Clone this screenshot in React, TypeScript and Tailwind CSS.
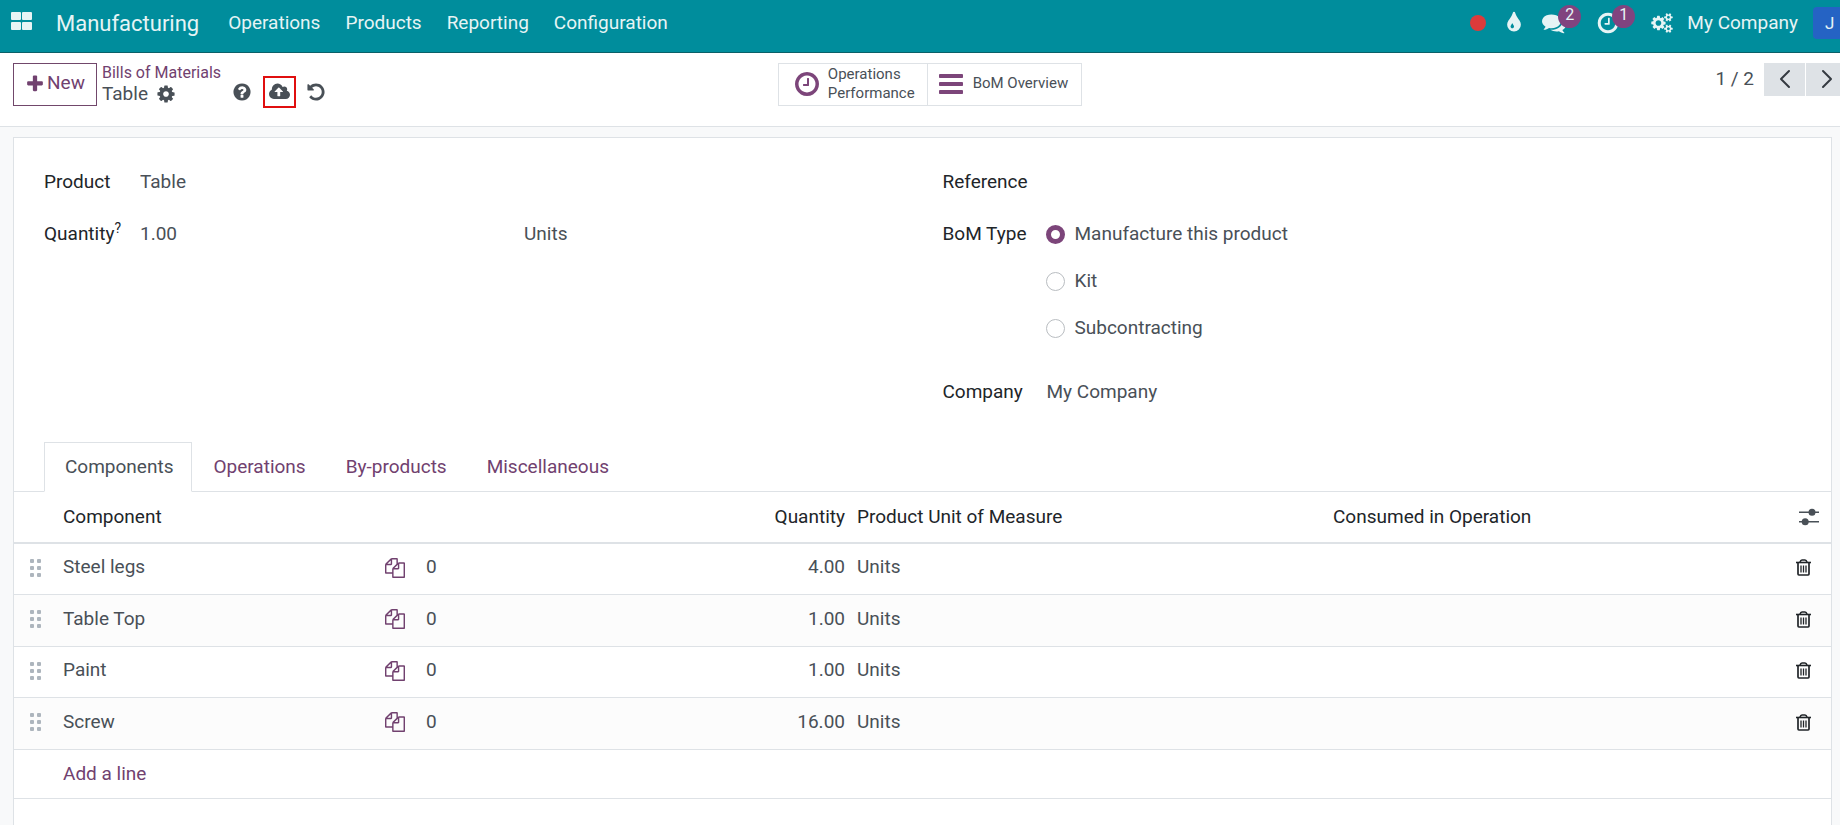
import { useState } from "react";

type Line = {
  name: string;
  attachments: number;
  quantity: string;
  unit: string;
};

const lines: Line[] = [
  { name: "Steel legs", attachments: 0, quantity: "4.00", unit: "Units" },
  { name: "Table Top", attachments: 0, quantity: "1.00", unit: "Units" },
  { name: "Paint", attachments: 0, quantity: "1.00", unit: "Units" },
  { name: "Screw", attachments: 0, quantity: "16.00", unit: "Units" },
];

const menus = ["Operations", "Products", "Reporting", "Configuration"];
const tabs = ["Components", "Operations", "By-products", "Miscellaneous"];
const bomTypes = ["Manufacture this product", "Kit", "Subcontracting"];

const paths = {
  plus: "M1600 736v192q0 40-28 68t-68 28h-416v416q0 40-28 68t-68 28h-192q-40 0-68-28t-28-68v-416h-416q-40 0-68-28t-28-68v-192q0-40 28-68t68-28h416v-416q0-40 28-68t68-28h192q40 0 68 28t28 68v416h416q40 0 68 28t28 68z",
  cog: "M1152 896q0-106-75-181t-181-75-181 75-75 181 75 181 181 75 181-75 75-181zm512-109v222q0 12-8 23t-20 13l-185 28q-19 54-39 91 35 50 107 138 10 12 10 25t-9 23q-27 37-99 108t-94 71q-12 0-26-9l-138-108q-44 23-91 38-16 136-29 186-7 28-36 28h-222q-14 0-24.5-8.5t-11.5-21.5l-28-184q-49-16-90-37l-141 107q-10 9-25 9-14 0-25-11-126-114-165-168-7-10-7-23 0-12 8-23 15-21 51-66.5t54-70.5q-27-50-41-99l-183-27q-13-2-21-12.5t-8-23.5v-222q0-12 8-23t19-13l186-28q14-46 39-92-40-57-107-138-10-12-10-24 0-10 9-23 26-36 98.5-107.5t94.5-71.5q13 0 26 10l138 107q44-23 91-38 16-136 29-186 7-28 36-28h222q14 0 24.5 8.5t11.5 21.5l28 184q49 16 90 37l142-107q9-9 24-9 13 0 25 10 129 119 165 170 7 8 7 22 0 12-8 23-15 21-51 66.5t-54 70.5q26 50 41 98l183 28q13 2 21 12.5t8 23.5z",
  help: "M1024 1376v-192q0-14-9-23t-23-9h-192q-14 0-23 9t-9 23v192q0 14 9 23t23 9h192q14 0 23-9t9-23zm256-672q0-88-55.5-163t-138.5-116-170-41q-243 0-371 213-15 24 8 42l132 100q7 6 19 6 16 0 25-12 53-68 86-92 34-24 86-24 48 0 85.5 26t37.5 59q0 38-20 61t-68 45q-63 28-115.5 86.5t-52.5 125.5v36q0 14 9 23t23 9h192q14 0 23-9t9-23q0-19 21.5-49.5t54.5-49.5q32-18 49-28.5t46-35 44.5-48 28-60.5 12.5-81zm384 192q0 209-103 385.5t-279.5 279.5-385.5 103-385.5-103-279.5-279.5-103-385.5 103-385.5 279.5-279.5 385.5-103 385.5 103 279.5 279.5 103 385.5z",
  upload: "M1216 864q0-14-9-23l-352-352q-9-9-23-9t-23 9l-351 351q-10 12-10 24 0 14 9 23t23 9h224v352q0 13 9.5 22.5t22.5 9.5h192q13 0 22.5-9.5t9.5-22.5v-352h224q13 0 22.5-9.5t9.5-22.5zm640 288q0 159-112.5 271.5t-271.5 112.5h-1088q-185 0-316.5-131.5t-131.5-316.5q0-130 70-240t188-165q-2-30-2-43 0-212 150-362t362-150q156 0 285.5 87t188.5 231q71-62 166-62 106 0 181 75t75 181q0 76-41 138 130 31 213.5 135.5t83.5 238.5z",
  undo: "M1664 896q0 156-61 298t-164 245-245 164-298 61q-172 0-327-72.5t-264-204.5q-7-10-6.5-22.5t8.5-20.5l137-138q10-9 25-9 16 2 23 12 73 95 179 147t225 52q104 0 198.5-40.5t163.5-109.5 109.5-163.5 40.5-198.5-40.5-198.5-109.5-163.5-163.5-109.5-198.5-40.5q-98 0-188 35.5t-160 101.5l137 138q31 30 14 69-17 40-59 40h-448q-26 0-45-19t-19-45v-448q0-42 40-59 39-17 69 14l130 129q107-101 244.5-156.5t284.5-55.5q156 0 298 61t245 164 164 245 61 298z",
  clock: "M1024 544v448q0 14-9 23t-23 9h-320q-14 0-23-9t-9-23v-64q0-14 9-23t23-9h224v-352q0-14 9-23t23-9h64q14 0 23 9t9 23zm416 352q0-148-73-273t-198-198-273-73-273 73-198 198-73 273 73 273 198 198 273 73 273-73 198-198 73-273zm224 0q0 209-103 385.5t-279.5 279.5-385.5 103-385.5-103-279.5-279.5-103-385.5 103-385.5 279.5-279.5 385.5-103 385.5 103 279.5 279.5 103 385.5z",
  bars: "M1664 1344v128q0 26-19 45t-45 19h-1408q-26 0-45-19t-19-45v-128q0-26 19-45t45-19h1408q26 0 45 19t19 45zm0-512v128q0 26-19 45t-45 19h-1408q-26 0-45-19t-19-45v-128q0-26 19-45t45-19h1408q26 0 45 19t19 45zm0-512v128q0 26-19 45t-45 19h-1408q-26 0-45-19t-19-45v-128q0-26 19-45t45-19h1408q26 0 45 19t19 45z",
  tint: "M896 1152q0-36-20-69-1-1-15.5-22.5t-25.5-38-25-44-21-50.5q-4-16-21-16t-21 16q-7 23-21 50.5t-25 44-25.5 38-15.5 22.5q-20 33-20 69 0 53 37.5 90.5t90.5 37.5 90.5-37.5 37.5-90.5zm512-128q0 212-150 362t-362 150-362-150-150-362q0-145 81-275 6-9 62.5-90.5t101-151 99.5-178 83-201.5q9-30 34-47t51-17 51.5 17 33.5 47q28 93 83 201.5t99.5 178 101 151 62.5 90.5q81 127 81 275z",
  comments: "M1408 768q0 139-94 257t-256.5 186.5-353.5 68.5q-86 0-176-16-124 88-278 128-36 9-86 16h-3q-11 0-20.5-8t-11.5-21q-1-3-1-6.5t.5-6.5 2-6l2.5-5 3.5-5.5 4-5 4.5-5 4-4.5q5-6 23-25t26-29.5 22.5-29 25-38.5 20.5-44q-124-72-195-177t-71-224q0-139 94-257t256.5-186.5 353.5-68.5 353.5 68.5 256.5 186.5 94 257zm384 256q0 120-71 224.5t-195 176.5q10 24 20.5 44t25 38.5 22.5 29 26 29.5 23 25q1 1 4 4.5t4.5 5 4 5 3.5 5.5l2.5 5 2 6 .5 6.5-1 6.5q-3 14-13 22t-22 7q-50-7-86-16-154-40-278-128-90 16-176 16-271 0-472-132 58 4 88 4 161 0 309-45t264-129q125-92 192-212t67-254q0-77-23-152 129 71 204 178t75 230z",
  cogs: "M832 896q0-106-75-181t-181-75-181 75-75 181 75 181 181 75 181-75 75-181zm768 512q0-52-38-90t-90-38-90 38-38 90q0 53 37.5 90.5t90.5 37.5 90.5-37.5 37.5-90.5zm0-1024q0-52-38-90t-90-38-90 38-38 90q0 53 37.5 90.5t90.5 37.5 90.5-37.5 37.5-90.5zm-384 421v185q0 10-7 19.5t-16 10.5l-155 24q-11 35-32 76 34 48 90 115 7 11 7 20 0 12-7 19-23 30-82.5 89.5t-78.5 59.5q-11 0-21-7l-115-90q-37 19-77 31-11 108-23 155-7 24-30 24h-186q-11 0-20-7.5t-10-17.5l-23-153q-34-10-75-31l-118 89q-7 7-20 7-11 0-21-8-144-133-144-160 0-9 7-19 10-14 41-53t47-61q-23-44-35-82l-152-24q-10-1-17-9.5t-7-19.5v-185q0-10 7-19.5t16-10.5l155-24q11-35 32-76-34-48-90-115-7-11-7-20 0-12 7-20 22-30 82-89t79-59q11 0 21 7l115 90q34-18 77-32 11-108 23-154 7-24 30-24h186q11 0 20 7.5t10 17.5l23 153q34 10 75 31l118-89q8-7 20-7 11 0 21 8 144 133 144 160 0 8-7 19-12 16-42 54t-45 60q23 48 34 82l152 23q10 2 17 10.5t7 19.5zm640 533v140q0 16-149 31-12 27-30 52 51 113 51 138 0 4-4 7-122 71-124 71-8 0-46-47t-52-68q-20 2-30 2t-30-2q-14 21-52 68t-46 47q-2 0-124-71-4-3-4-7 0-25 51-138-18-25-30-52-149-15-149-31v-140q0-16 149-31 13-29 30-52-51-113-51-138 0-4 4-7 4-2 35-20t59-34 30-16q8 0 46 46.5t52 67.5q20-2 30-2t30 2q51-71 92-112l6-2q4 0 124 70 4 3 4 7 0 25-51 138 17 23 30 52 149 15 149 31zm0-1024v140q0 16-149 31-12 27-30 52 51 113 51 138 0 4-4 7-122 71-124 71-8 0-46-47t-52-68q-20 2-30 2t-30-2q-14 21-52 68t-46 47q-2 0-124-71-4-3-4-7 0-25 51-138-18-25-30-52-149-15-149-31v-140q0-16 149-31 13-29 30-52-51-113-51-138 0-4 4-7 4-2 35-20t59-34 30-16q8 0 46 46.5t52 67.5q20-2 30-2t30 2q51-71 92-112l6-2q4 0 124 70 4 3 4 7 0 25-51 138 17 23 30 52 149 15 149 31z",
  files: "M1696 384q40 0 68 28t28 68v1216q0 40-28 68t-68 28h-960q-40 0-68-28t-28-68v-288h-544q-40 0-68-28t-28-68v-672q0-40 20-88t48-76l408-408q28-28 76-48t88-20h416q40 0 68 28t28 68v328q68-40 128-40h416zm-544 213l-299 299h299v-299zm-640-384l-299 299h299v-299zm196 647l316-316v-416h-384v416q0 40-28 68t-68 28h-416v640h512v-256q0-40 20-88t48-76zm956 804v-1152h-384v416q0 40-28 68t-68 28h-416v640h896z",
};

type IconProps = {
  name: keyof typeof paths;
  className: string;
};

function Icon({ name, className }: IconProps) {
  const wide = name === "upload" || name === "cogs";
  return (
    <svg
      viewBox={wide ? "-64 0 1920 1792" : "0 0 1792 1792"}
      className={`shrink-0 ${className}`}
      fill="currentColor"
      aria-hidden="true"
    >
      <path d={paths[name]} />
    </svg>
  );
}

function AppsIcon() {
  return (
    <svg viewBox="0 0 21 18" className="h-[18px] w-[21px]" fill="currentColor" aria-hidden="true">
      <rect width="10" height="8" rx="1" />
      <rect x="11" width="10" height="8" rx="1" />
      <rect y="10" width="10" height="8" rx="1" />
      <rect x="11" y="10" width="10" height="8" rx="1" />
    </svg>
  );
}

function TrashIcon() {
  return (
    <svg viewBox="0 0 15 17" className="h-[17px] w-[15px]" fill="none" stroke="currentColor" aria-hidden="true">
      <path d="M0 3.5h15" strokeWidth="1.6" />
      <path d="M4 3.2q.6-2.2 2-2.2h3q1.4 0 2 2.2" strokeWidth="1.6" />
      <path d="M2 3.5v11.6q0 .9.9.9h9.2q.9 0 .9-.9V3.5" strokeWidth="1.7" />
      <path d="M5 6.5v7M7.5 6.5v7M10 6.5v7" strokeWidth="1.3" />
    </svg>
  );
}

function SlidersIcon() {
  return (
    <svg viewBox="0 0 20 18" className="h-[18px] w-5" fill="currentColor" aria-hidden="true">
      <path d="M0 3.5h20v1.4H0zM0 13h20v1.4H0z" />
      <circle cx="13" cy="4.2" r="3.5" />
      <circle cx="6.2" cy="13.7" r="3.5" />
    </svg>
  );
}

function HandleIcon() {
  return (
    <svg viewBox="0 0 12 18" className="h-[18px] w-3" fill="#adb5bd" aria-hidden="true">
      {[0, 7].map((x) =>
        [0, 7, 14].map((y) => <rect key={`${x}-${y}`} x={x} y={y} width="4" height="4" rx="1" />)
      )}
    </svg>
  );
}

function Chevron({ d }: { d: string }) {
  return (
    <svg viewBox="0 0 12 20" className="h-5 w-3" fill="none" stroke="#343a40" strokeWidth="2" aria-hidden="true">
      <path d={d} strokeLinecap="round" strokeLinejoin="round" />
    </svg>
  );
}

function Navbar() {
  return (
    <header className="flex h-[53px] items-center overflow-hidden border-b border-[#0b6068] bg-[#008d9c] pb-[7px] pl-[11px] text-[#e6f4f5]">
      <button type="button" aria-label="Apps" className="-mt-1">
        <AppsIcon />
      </button>
      <a href="#" className="ml-6 pt-0.5 text-[22px]">
        Manufacturing
      </a>
      <nav className="ml-[29px] flex gap-[25px] pt-0.5 text-[19px]">
        {menus.map((menu) => (
          <a key={menu} href="#">
            {menu}
          </a>
        ))}
      </nav>
      <div className="-mr-2 ml-auto flex items-center text-[19px]">
        <span className="size-4 rounded-full bg-[#dc3b3b]" />
        <button type="button" aria-label="Theme" className="ml-4">
          <Icon name="tint" className="size-6" />
        </button>
        <button type="button" aria-label="Messages" className="relative ml-4">
          <Icon name="comments" className="size-6" />
          <span className="absolute -top-[6px] left-4 flex size-[23px] items-center justify-center rounded-full bg-[#81437f] pb-[3px] text-base">
            2
          </span>
        </button>
        <button type="button" aria-label="Activities" className="relative ml-[30px]">
          <Icon name="clock" className="size-6" />
          <span className="absolute -top-[6px] left-4 flex size-[23px] items-center justify-center rounded-full bg-[#81437f] pb-[3px] text-base">
            1
          </span>
        </button>
        <button type="button" aria-label="Developer tools" className="ml-[31px]">
          <Icon name="cogs" className="h-5 w-[22px]" />
        </button>
        <button type="button" className="ml-[14px] pt-0.5">
          My Company
        </button>
        <button
          type="button"
          className="ml-[15px] size-8 w-[35px] rounded bg-[#2563c4] pt-0.5 pl-3 text-left text-[17px]"
        >
          J
        </button>
      </div>
    </header>
  );
}

function ControlPanel() {
  return (
    <div className="flex h-[74px] items-start border-b border-[#dee2e6] bg-white pt-[10px] pl-[13px]">
      <div className="flex flex-1 items-start">
        <button
          type="button"
          className="flex h-[43px] w-[84px] items-center justify-center gap-0.5 border border-[#71476b] pb-0.5 text-[19px] text-[#71416f]"
        >
          <Icon name="plus" className="size-5" />
          New
        </button>
        <div className="-mt-px ml-[5px] text-base leading-[21px]">
          <a href="#" className="block text-[#71416f]">
            Bills of Materials
          </a>
          <div className="flex items-center gap-2 text-[19px]">
            <span>Table</span>
            <button type="button" aria-label="Actions">
              <Icon name="cog" className="size-5" />
            </button>
          </div>
        </div>
        <div className="ml-[11px] flex items-center pt-[13px]">
          <button type="button" aria-label="Help">
            <Icon name="help" className="size-5" />
          </button>
          <button
            type="button"
            aria-label="Save manually"
            className="ml-[11px] flex h-8 w-[33px] items-center justify-center border-2 border-[#e00f0f]"
          >
            <Icon name="upload" className="h-5 w-[21px]" />
          </button>
          <button type="button" aria-label="Discard changes" className="ml-[10px]">
            <Icon name="undo" className="size-5" />
          </button>
        </div>
      </div>
      <div className="ml-[7px] flex h-[43px] border border-[#dee2e6] text-[15px] leading-[19px]">
        <button type="button" className="flex items-center gap-[7px] border-r border-[#dee2e6] pr-3 pb-0.5 pl-[14px] text-left">
          <Icon name="clock" className="size-7 text-[#7c457a]" />
          <span>
            Operations
            <br />
            Performance
          </span>
        </button>
        <button type="button" className="flex items-center gap-2 pr-[13px] pb-0.5 pl-[9px]">
          <Icon name="bars" className="size-7 text-[#7c457a]" />
          BoM Overview
        </button>
      </div>
      <div className="flex flex-1 items-center justify-end overflow-hidden text-[19px]">
        <span className="mr-[10px]">1 / 2</span>
        <div className="-mr-[7px] flex gap-px">
          <button
            type="button"
            aria-label="Previous"
            className="flex h-[33px] w-[41px] items-center justify-center bg-[#dee2e6] pb-0.5"
          >
            <Chevron d="M10 2L2 10l8 8" />
          </button>
          <button
            type="button"
            aria-label="Next"
            className="flex h-[33px] w-[41px] items-center justify-center bg-[#dee2e6] pb-0.5"
          >
            <Chevron d="M2 2l8 8-8 8" />
          </button>
        </div>
      </div>
    </div>
  );
}

function BomForm() {
  const [bomType, setBomType] = useState(bomTypes[0]);

  return (
    <form className="grid grid-cols-2 px-[30px] pt-[30px]">
      <div>
        <div className="flex h-7 items-center">
          <label htmlFor="product" className="w-24 text-[#212529]">
            Product
          </label>
          <input id="product" defaultValue="Table" className="w-80 outline-none" />
        </div>
        <div className="mt-6 flex h-7 items-center">
          <label htmlFor="quantity" className="w-24 text-[#212529]">
            Quantity<sup className="text-sm">?</sup>
          </label>
          <input id="quantity" defaultValue="1.00" className="w-[384px] outline-none" />
          <input aria-label="Unit of measure" defaultValue="Units" className="w-60 outline-none" />
        </div>
      </div>
      <div className="pl-5">
        <div className="flex h-7 items-center">
          <label htmlFor="reference" className="w-[104px] text-[#212529]">
            Reference
          </label>
          <input id="reference" className="w-80 outline-none" />
        </div>
        <div role="radiogroup" aria-labelledby="bom-type" className="mt-6 flex items-start">
          <span id="bom-type" className="w-[103px] text-[#212529]">
            BoM Type
          </span>
          <div className="flex flex-col gap-[19px]">
            {bomTypes.map((type) => (
              <label key={type} className="flex h-7 items-center gap-[10px]">
                <input
                  type="radio"
                  name="bomType"
                  checked={bomType === type}
                  onChange={() => setBomType(type)}
                  className="size-[19px] appearance-none rounded-full border border-[#b9bdc1] checked:border-[5px] checked:border-[#7c457a]"
                />
                {type}
              </label>
            ))}
          </div>
        </div>
        <div className="mt-9 flex h-7 items-center">
          <label htmlFor="company" className="w-[104px] text-[#212529]">
            Company
          </label>
          <input id="company" defaultValue="My Company" className="w-80 outline-none" />
        </div>
      </div>
    </form>
  );
}

function Notebook() {
  const [activeTab, setActiveTab] = useState(0);

  return (
    <div role="tablist" className="mt-9 flex h-[50px] border-b border-[#dee2e6] pl-[30px]">
      {tabs.map((tab, i) => (
        <button
          key={tab}
          type="button"
          role="tab"
          aria-selected={activeTab === i}
          onClick={() => setActiveTab(i)}
          className={`-mb-px border pr-[18px] pl-5 ${
            activeTab === i
              ? "border-[#dee2e6] border-b-white bg-white"
              : "border-transparent text-[#71416f]"
          }`}
        >
          {tab}
        </button>
      ))}
    </div>
  );
}

function ComponentsTable() {
  return (
    <table className="w-full table-fixed border-separate border-spacing-0 text-left">
      <colgroup>
        <col className="w-[49px]" />
        <col className="w-[322px]" />
        <col className="w-[41px]" />
        <col className="w-[301px]" />
        <col className="w-[124px]" />
        <col className="w-[476px]" />
        <col />
        <col className="w-[60px]" />
      </colgroup>
      <thead className="text-[#212529]">
        <tr className="h-[52px] *:border-b-2 *:border-[#dee2e6] *:font-normal">
          <th />
          <th>Component</th>
          <th />
          <th />
          <th className="pr-[6px] text-right">Quantity</th>
          <th className="pl-[6px]">Product Unit of Measure</th>
          <th className="pl-[6px]">Consumed in Operation</th>
          <th>
            <button type="button" aria-label="Optional columns" className="ml-7 flex text-[#495057]">
              <SlidersIcon />
            </button>
          </th>
        </tr>
      </thead>
      <tbody>
        {lines.map((line) => (
          <tr
            key={line.name}
            className="h-[51px] *:border-b *:border-[#dee2e6] *:pb-[3px] even:h-[52px] even:bg-[#fcfcfc]"
          >
            <td className="pl-4">
              <HandleIcon />
            </td>
            <td>{line.name}</td>
            <td>
              <button type="button" aria-label={`Attachments of ${line.name}`} className="flex text-[#71416f]">
                <Icon name="files" className="size-5" />
              </button>
            </td>
            <td>{line.attachments}</td>
            <td className="pr-[6px] text-right">{line.quantity}</td>
            <td className="pl-[6px]">{line.unit}</td>
            <td />
            <td>
              <button type="button" aria-label={`Delete ${line.name}`} className="ml-[25px] flex text-[#212529]">
                <TrashIcon />
              </button>
            </td>
          </tr>
        ))}
        <tr className="h-[49px] *:border-b *:border-[#dee2e6]">
          <td />
          <td colSpan={7}>
            <a href="#" className="text-[#71416f]">
              Add a line
            </a>
          </td>
        </tr>
      </tbody>
    </table>
  );
}

export default function App() {
  return (
    <div className="flex min-h-screen flex-col bg-[#f8f9fa] font-['Roboto',sans-serif] text-[#495057]">
      <Navbar />
      <ControlPanel />
      <main className="mt-[10px] mr-2 ml-[13px] flex-1 border border-b-0 border-[#dee2e6] bg-white text-[19px]">
        <BomForm />
        <Notebook />
        <ComponentsTable />
      </main>
    </div>
  );
}
